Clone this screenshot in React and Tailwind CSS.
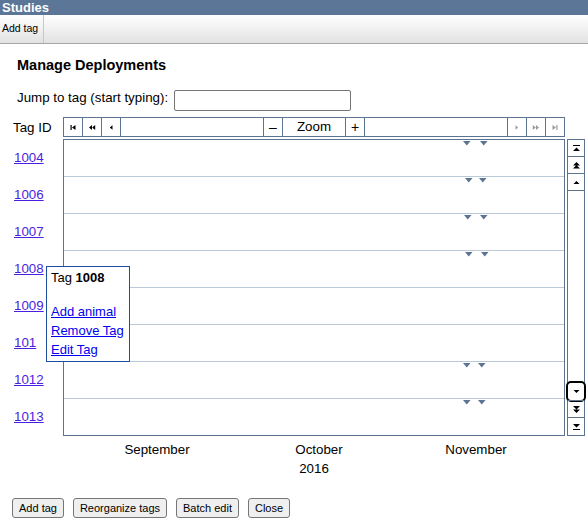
import React from 'react';

const BORDER = 'border-[#5b7491]';

const rows = [
  { id: '1004', marks: [399, 416] },
  { id: '1006', marks: [401, 415] },
  { id: '1007', marks: [400, 416] },
  { id: '1008', marks: [401, 417] },
  { id: '1009', marks: [] },
  { id: '101', marks: [] },
  { id: '1012', marks: [399, 414] },
  { id: '1013', marks: [399, 414] },
];

function NavIcon({ d, color = '#000' }) {
  return (
    <svg width="8" height="7" viewBox="0 0 8 7" fill={color}>
      <path d={d} />
    </svg>
  );
}

function ScrollIcon({ d }) {
  return (
    <svg width="9" height="9" viewBox="0 0 9 9" fill="#000">
      <path d={d} />
    </svg>
  );
}

function Mark() {
  return (
    <svg width="8" height="5" viewBox="0 0 8 5" fill="#5b7491">
      <path d="M0 0H7.5L3.75 4.5z" />
    </svg>
  );
}

export default function App() {
  const cell = `w-[19px] shrink-0 border-r ${BORDER} flex items-center justify-center`;
  const sbtn = `h-[17px] shrink-0 flex items-center justify-center`;

  return (
    <div className="w-[588px] h-[520px] bg-white relative overflow-hidden font-['Liberation_Sans',Arial,sans-serif] text-[13.33px] text-black">
      {/* Title bar */}
      <div className="h-[15px] bg-[#5b7696] text-white font-bold text-[13px] leading-[15px] pl-[2px]">Studies</div>
      {/* Tool strip */}
      <div className="h-[29px] bg-gradient-to-b from-white to-[#e2e2e2] border-b border-[#a6a6a6] flex items-stretch">
        <div className="pl-[2px] pr-[5px] text-[10.5px] flex items-center border-r border-[#c8c8c8]">Add tag</div>
      </div>

      <div className="pl-[17px]">
        <h1 className="mt-[13px] font-bold text-[14.5px] leading-[17px]">Manage Deployments</h1>
        <div className="mt-[16px] flex items-start">
          <span className="leading-[15px]">Jump to tag (start typing):</span>
          <div className="ml-[6px] w-[177px] h-[21px] border border-[#767676] rounded-[2px] bg-white" />
        </div>
      </div>

      {/* Timeline header */}
      <div className="mt-[6px] flex items-center">
        <div className="w-[63px] shrink-0 pl-[13px] leading-[15px]">Tag ID</div>
        <div className={`w-[502px] h-[20px] border ${BORDER} flex items-stretch`}>
          <div className={cell}><NavIcon d="M1.5 1h1.2v5H1.5zM6.5 1v5L3 3.5z" /></div>
          <div className={cell}><NavIcon d="M4 1v5L1 3.5zM7.2 1v5L4.2 3.5z" /></div>
          <div className={cell}><NavIcon d="M5.5 1.3v4.4L2.8 3.5z" /></div>
          <div className={`flex-1 border-r ${BORDER}`} />
          <div className={`${cell} text-[14px]`}>–</div>
          <div className={`w-[63px] shrink-0 border-r ${BORDER} flex items-center justify-center`}>Zoom</div>
          <div className={`${cell} text-[14px]`}>+</div>
          <div className={`flex-1 border-r ${BORDER}`} />
          <div className={cell}><NavIcon color="#9b9b9b" d="M2.5 1.3v4.4L5.2 3.5z" /></div>
          <div className={cell}><NavIcon color="#9b9b9b" d="M0.8 1v5L3.8 3.5zM4 1v5L7 3.5z" /></div>
          <div className="w-[18px] shrink-0 flex items-center justify-center"><NavIcon color="#9b9b9b" d="M1.5 1v5L5 3.5zM5.3 1h1.2v5H5.3z" /></div>
        </div>
      </div>

      {/* Timeline body */}
      <div className="mt-[2px] flex items-start">
        <div className="w-[63px] shrink-0 pl-[14px] flex flex-col">
          {rows.map((r) => (
            <div key={r.id} className="h-[37px] flex items-center">
              <a href="#" className="text-[#4b1ee0] underline leading-[15px]">{r.id}</a>
            </div>
          ))}
        </div>
        <div className={`w-[502px] border ${BORDER} flex flex-col`}>
          {rows.map((r, i) => (
            <div key={r.id} className={`h-[36px] relative ${i > 0 ? 'mt-[1px] shadow-[0_-1px_0_#b9c9da]' : ''}`}>
              {r.marks.map((x) => (
                <span key={x} className="absolute top-[1px] flex" style={{ left: x }}>
                  <Mark />
                </span>
              ))}
            </div>
          ))}
        </div>
        <div className={`ml-[2px] w-[18px] h-[297px] border ${BORDER} flex flex-col`}>
          <div className={`${sbtn} border-b ${BORDER}`}><ScrollIcon d="M1 1h7v1H1zM4.5 3.5L8 7H1z" /></div>
          <div className={`${sbtn} border-b ${BORDER}`}><ScrollIcon d="M4.5 1L8 4.5H1zM4.5 4L8 7.5H1z" /></div>
          <div className={`${sbtn} border-b ${BORDER}`}><ScrollIcon d="M4.5 3L7.5 6H1.5z" /></div>
          <div className="flex-1" />
          <div className={`${sbtn} rounded-[3px] outline-2 outline-solid outline-black`}><ScrollIcon d="M1.5 3H7.5L4.5 6z" /></div>
          <div className={`${sbtn} border-y ${BORDER} h-[18px]`}><ScrollIcon d="M1 1H8L4.5 4.5zM1 4.5H8L4.5 8z" /></div>
          <div className={sbtn}><ScrollIcon d="M1 2H8L4.5 5.5zM1 7h7v1H1z" /></div>
        </div>
      </div>

      {/* Month axis */}
      <div className="mt-[4px] ml-[64px] w-[500px] h-[38px] relative leading-[19px]">
        <span className="absolute top-0 left-[93px] -translate-x-1/2">September</span>
        <span className="absolute top-0 left-[255px] -translate-x-1/2">October</span>
        <span className="absolute top-0 left-[412px] -translate-x-1/2">November</span>
        <span className="absolute top-[19px] left-[250px] -translate-x-1/2">2016</span>
      </div>

      {/* Bottom buttons */}
      <div className="mt-[20px] pl-[12px] flex gap-[9px]">
        {['Add tag', 'Reorganize tags', 'Batch edit', 'Close'].map((b) => (
          <button key={b} className="h-[20px] px-[6px] text-[11px] bg-[#efefef] border border-[#767676] rounded-[3px] leading-none">
            {b}
          </button>
        ))}
      </div>

      {/* Tag context popup */}
      <div className="absolute left-[46px] top-[266px] w-[84px] h-[96px] bg-white border border-[#1d4e9e] pl-[4px] pt-[1px] z-10 text-[13px] whitespace-nowrap">
        <div className="leading-[19px]">Tag <b>1008</b></div>
        <div className="mt-[15px] flex flex-col items-start leading-[19px]">
          <a href="#" className="text-[#0000ee] underline">Add animal</a>
          <a href="#" className="text-[#0000ee] underline">Remove Tag</a>
          <a href="#" className="text-[#0000ee] underline">Edit Tag</a>
        </div>
      </div>
    </div>
  );
}
